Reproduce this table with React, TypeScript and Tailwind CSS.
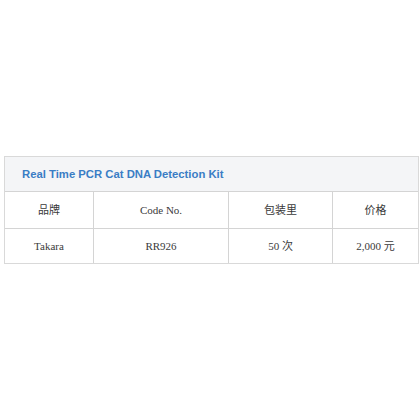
export default function App() {
    const cell = "border-r border-[#d4d4d4] text-center";
    return (
        <div className="w-[420px] h-[420px] bg-white pt-[156px] pl-[4px]">
            <div className="w-[415px] border border-[#d9d9d9]">
                {/* Title bar */}
                <div className="h-[35px] bg-[#f4f5f7] border-b border-[#d4d4d4] flex items-center pl-[17px]">
                    <span
                        className="text-[11.3px] font-bold text-[#3a7dc5]"
                        style={{ fontFamily: "Arial, 'Liberation Sans', sans-serif" }}
                    >
                        Real Time PCR Cat DNA Detection Kit
                    </span>
                </div>
                {/* Table */}
                <div
                    className="text-[11px] text-[#3a3a3a]"
                    style={{ fontFamily: "'Liberation Serif', 'Noto Sans CJK SC', serif" }}
                >
                    <div className="grid grid-cols-[89px_135px_104px_1fr] h-[37px] items-stretch border-b border-[#d4d4d4]">
                        <div className={`${cell} flex items-center justify-center`}>品牌</div>
                        <div className={`${cell} flex items-center justify-center`}>Code No.</div>
                        <div className={`${cell} flex items-center justify-center`}>包装里</div>
                        <div className="flex items-center justify-center">价格</div>
                    </div>
                    <div className="grid grid-cols-[89px_135px_104px_1fr] h-[34px] items-stretch">
                        <div className={`${cell} flex items-center justify-center`}>Takara</div>
                        <div className={`${cell} flex items-center justify-center`}>RR926</div>
                        <div className={`${cell} flex items-center justify-center`}>50 次</div>
                        <div className="flex items-center justify-center">2,000 元</div>
                    </div>
                </div>
            </div>
        </div>
    );
}
